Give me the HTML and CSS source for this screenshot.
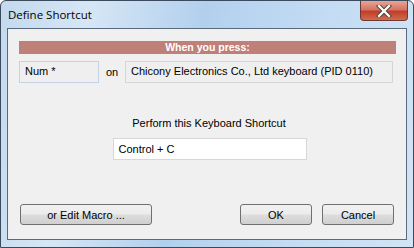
FILE: index.html
```html
<!DOCTYPE html>
<html lang="en">
<head>
    <meta charset="UTF-8">
    <title>Define Shortcut</title>
    <link rel="stylesheet" href="styles.css">
</head>
<body>
    <div class="window">
        <div class="titlebar">
            <span class="title">Define Shortcut</span>
            <div class="close-btn">
                <svg width="16" height="12" viewBox="0 0 16 12">
                    <path d="M3 1 L13 11 M13 1 L3 11" stroke="#4a4a4a" stroke-width="4.2" stroke-linecap="square"/>
                    <path d="M3 1 L13 11 M13 1 L3 11" stroke="#ffffff" stroke-width="2.2" stroke-linecap="square"/>
                </svg>
            </div>
        </div>
        <div class="client">
            <div class="header-bar">When you press:</div>
            <div class="key-row">
                <div class="field key-field">Num *</div>
                <span class="on-label">on</span>
                <div class="field device-field">Chicony Electronics Co., Ltd keyboard (PID 0110)</div>
            </div>
            <div class="perform">
                <div class="perform-label">Perform this Keyboard Shortcut</div>
                <div class="shortcut-input">Control + C</div>
            </div>
            <div class="button-row">
                <button class="btn macro-btn">or Edit Macro ...</button>
                <div class="right-buttons">
                    <button class="btn">OK</button>
                    <button class="btn">Cancel</button>
                </div>
            </div>
        </div>
    </div>
</body>
</html>
```

FILE: styles.css
```css
body {
    margin: 0;
    padding: 0;
    background-color: #fff;
    font-family: "Liberation Sans", Tahoma, sans-serif;
    font-size: 11px;
    color: #000;
}
.window {
    width: 414px;
    height: 248px;
    box-sizing: border-box;
    display: flex;
    flex-direction: column;
    border: 1px solid #3b4a5c;
    border-radius: 6px 6px 0 0;
    background: linear-gradient(100deg, #c3d9ee 0%, #d6e6f5 20%, #b2d0ee 45%, #c2dbf3 70%, #d2e4f6 100%);
}
.titlebar {
    height: 27px;
    display: flex;
    justify-content: space-between;
    align-items: flex-start;
    padding-left: 7px;
}
.title {
    font-family: "Open Sans", "Segoe UI", sans-serif;
    font-size: 11.5px;
    margin-top: 6px;
    color: #000;
}
.close-btn {
    width: 46px;
    height: 19px;
    margin-right: 5px;
    display: flex;
    align-items: center;
    justify-content: center;
    border: 1px solid #6e3a33;
    border-top: none;
    border-radius: 0 0 4px 4px;
    background: linear-gradient(#e8a596 0%, #d47464 45%, #c23e27 55%, #d06a4f 100%);
}
.client {
    flex: 1;
    margin: 0 6px 7px 6px;
    border: 1px solid #5c6b7c;
    background-color: #f0f0f0;
    padding: 12px 10px 0 11px;
    display: flex;
    flex-direction: column;
}
.header-bar {
    height: 13px;
    background-color: #c0807a;
    color: #fff;
    font-weight: bold;
    font-size: 10.5px;
    line-height: 13px;
    text-align: center;
}
.key-row {
    display: flex;
    align-items: center;
    margin-top: 7px;
}
.field {
    height: 22px;
    box-sizing: border-box;
    border: 1px solid #d5d5d5;
    background-color: #efefef;
    line-height: 19px;
    padding-left: 5px;
    white-space: nowrap;
}
.key-field {
    width: 80px;
    border-color: #c3d3e3;
}
.on-label {
    width: 26px;
    text-align: center;
}
.device-field {
    flex: 1;
    margin-right: 3px;
}
.perform {
    display: flex;
    flex-direction: column;
    align-items: center;
    margin-top: 34px;
}
.perform-label {
    margin-left: 3px;
}
.shortcut-input {
    margin-top: 9px;
    margin-left: 4px;
    width: 194px;
    height: 22px;
    box-sizing: border-box;
    border: 1px solid #d7d7d7;
    background-color: #fff;
    line-height: 20px;
    padding-left: 5px;
}
.button-row {
    display: flex;
    justify-content: space-between;
    margin-top: 44px;
    padding-right: 2px;
}
.right-buttons {
    display: flex;
    gap: 10px;
}
.btn {
    height: 21px;
    width: 72px;
    padding: 0;
    font-family: "Liberation Sans", Tahoma, sans-serif;
    font-size: 11px;
    color: #000;
    border: 1px solid #707070;
    border-radius: 3px;
    background: linear-gradient(#f2f2f2 0%, #ebebeb 48%, #dddddd 52%, #cfcfcf 100%);
}
.macro-btn {
    width: 132px;
    margin-left: 1px;
}
```
